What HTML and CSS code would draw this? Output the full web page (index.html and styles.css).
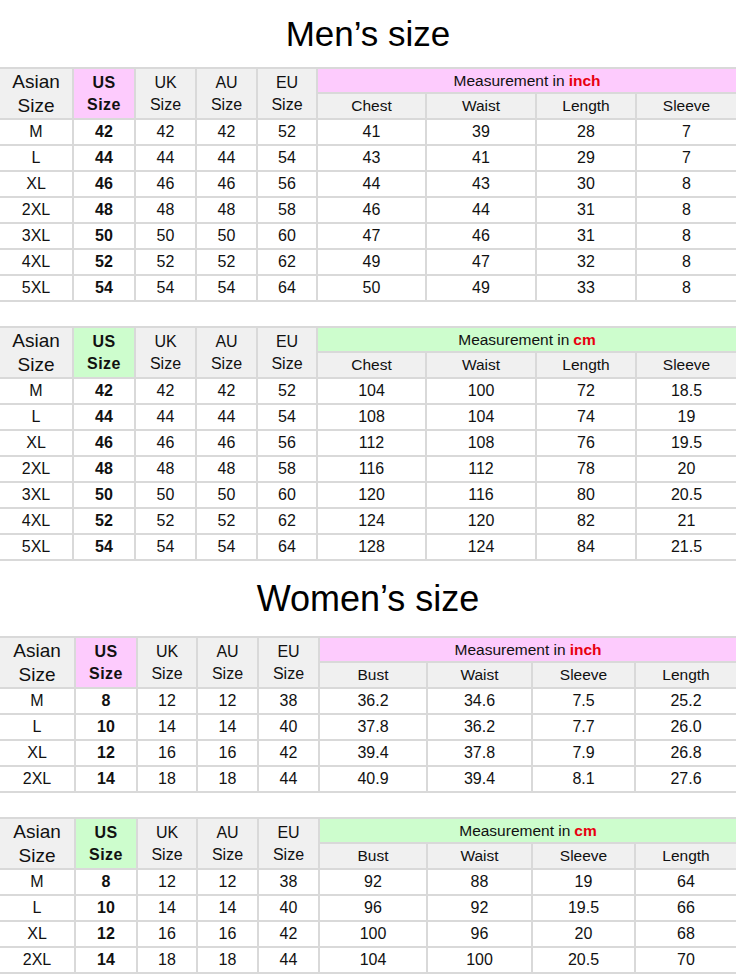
FILE: index.html
```html
<!DOCTYPE html>
<html lang="en">
<head>
<meta charset="utf-8">
<title>Size charts</title>
<link rel="stylesheet" href="styles.css">
</head>
<body>
<h1 class="title title-men">Men’s size</h1>

<div class="chart men inch">
  <div class="hd asian">Asian<br>Size</div>
  <div class="hd us">US<br>Size</div>
  <div class="hd">UK<br>Size</div>
  <div class="hd">AU<br>Size</div>
  <div class="hd">EU<br>Size</div>
  <div class="unit">Measurement in <b>inch</b></div>
  <div class="sub">Chest</div><div class="sub">Waist</div><div class="sub">Length</div><div class="sub">Sleeve</div>
  <div>M</div><div class="b">42</div><div>42</div><div>42</div><div>52</div><div>41</div><div>39</div><div>28</div><div>7</div>
  <div>L</div><div class="b">44</div><div>44</div><div>44</div><div>54</div><div>43</div><div>41</div><div>29</div><div>7</div>
  <div>XL</div><div class="b">46</div><div>46</div><div>46</div><div>56</div><div>44</div><div>43</div><div>30</div><div>8</div>
  <div>2XL</div><div class="b">48</div><div>48</div><div>48</div><div>58</div><div>46</div><div>44</div><div>31</div><div>8</div>
  <div>3XL</div><div class="b">50</div><div>50</div><div>50</div><div>60</div><div>47</div><div>46</div><div>31</div><div>8</div>
  <div>4XL</div><div class="b">52</div><div>52</div><div>52</div><div>62</div><div>49</div><div>47</div><div>32</div><div>8</div>
  <div>5XL</div><div class="b">54</div><div>54</div><div>54</div><div>64</div><div>50</div><div>49</div><div>33</div><div>8</div>
</div>

<div class="chart men cm">
  <div class="hd asian">Asian<br>Size</div>
  <div class="hd us">US<br>Size</div>
  <div class="hd">UK<br>Size</div>
  <div class="hd">AU<br>Size</div>
  <div class="hd">EU<br>Size</div>
  <div class="unit">Measurement in <b>cm</b></div>
  <div class="sub">Chest</div><div class="sub">Waist</div><div class="sub">Length</div><div class="sub">Sleeve</div>
  <div>M</div><div class="b">42</div><div>42</div><div>42</div><div>52</div><div>104</div><div>100</div><div>72</div><div>18.5</div>
  <div>L</div><div class="b">44</div><div>44</div><div>44</div><div>54</div><div>108</div><div>104</div><div>74</div><div>19</div>
  <div>XL</div><div class="b">46</div><div>46</div><div>46</div><div>56</div><div>112</div><div>108</div><div>76</div><div>19.5</div>
  <div>2XL</div><div class="b">48</div><div>48</div><div>48</div><div>58</div><div>116</div><div>112</div><div>78</div><div>20</div>
  <div>3XL</div><div class="b">50</div><div>50</div><div>50</div><div>60</div><div>120</div><div>116</div><div>80</div><div>20.5</div>
  <div>4XL</div><div class="b">52</div><div>52</div><div>52</div><div>62</div><div>124</div><div>120</div><div>82</div><div>21</div>
  <div>5XL</div><div class="b">54</div><div>54</div><div>54</div><div>64</div><div>128</div><div>124</div><div>84</div><div>21.5</div>
</div>

<h1 class="title title-women">Women’s size</h1>

<div class="chart women inch">
  <div class="hd asian">Asian<br>Size</div>
  <div class="hd us">US<br>Size</div>
  <div class="hd">UK<br>Size</div>
  <div class="hd">AU<br>Size</div>
  <div class="hd">EU<br>Size</div>
  <div class="unit">Measurement in <b>inch</b></div>
  <div class="sub">Bust</div><div class="sub">Waist</div><div class="sub">Sleeve</div><div class="sub">Length</div>
  <div>M</div><div class="b">8</div><div>12</div><div>12</div><div>38</div><div>36.2</div><div>34.6</div><div>7.5</div><div>25.2</div>
  <div>L</div><div class="b">10</div><div>14</div><div>14</div><div>40</div><div>37.8</div><div>36.2</div><div>7.7</div><div>26.0</div>
  <div>XL</div><div class="b">12</div><div>16</div><div>16</div><div>42</div><div>39.4</div><div>37.8</div><div>7.9</div><div>26.8</div>
  <div>2XL</div><div class="b">14</div><div>18</div><div>18</div><div>44</div><div>40.9</div><div>39.4</div><div>8.1</div><div>27.6</div>
</div>

<div class="chart women cm">
  <div class="hd asian">Asian<br>Size</div>
  <div class="hd us">US<br>Size</div>
  <div class="hd">UK<br>Size</div>
  <div class="hd">AU<br>Size</div>
  <div class="hd">EU<br>Size</div>
  <div class="unit">Measurement in <b>cm</b></div>
  <div class="sub">Bust</div><div class="sub">Waist</div><div class="sub">Sleeve</div><div class="sub">Length</div>
  <div>M</div><div class="b">8</div><div>12</div><div>12</div><div>38</div><div>92</div><div>88</div><div>19</div><div>64</div>
  <div>L</div><div class="b">10</div><div>14</div><div>14</div><div>40</div><div>96</div><div>92</div><div>19.5</div><div>66</div>
  <div>XL</div><div class="b">12</div><div>16</div><div>16</div><div>42</div><div>100</div><div>96</div><div>20</div><div>68</div>
  <div>2XL</div><div class="b">14</div><div>18</div><div>18</div><div>44</div><div>104</div><div>100</div><div>20.5</div><div>70</div>
</div>
</body>
</html>
```

FILE: styles.css
```css
* { box-sizing: border-box; }

html, body {
  margin: 0;
  padding: 0;
  background: #ffffff;
}

body {
  width: 736px;
  font-family: "Liberation Sans", Arial, sans-serif;
  color: #111111;
}

.title {
  margin: 0;
  font-weight: 400;
  text-align: center;
  color: #000000;
}

.title-men {
  font-size: 35px;
  line-height: 67px;
  height: 67px;
}

.title-women {
  font-size: 36px;
  line-height: 75px;
  height: 75px;
}

.chart {
  display: grid;
  gap: 2px;
  padding: 2px 0;
  background: #d9d9d9;
  grid-template-rows: 23px 24px;
  grid-auto-rows: 24px;
}

.chart + .chart {
  margin-top: 24px;
}

.men {
  grid-template-columns: 72px 60px 59px 59px 58px 107px 108px 98px 1fr;
}

.women {
  grid-template-columns: 74px 60px 58px 59px 59px 106px 103px 101px 1fr;
}

.chart > div {
  background: #ffffff;
  display: flex;
  align-items: center;
  justify-content: center;
  text-align: center;
  font-size: 16px;
  line-height: 18px;
}

.chart > .hd {
  grid-row: span 2;
  background: #f0f0f0;
  font-size: 16px;
  line-height: 22px;
}

.chart > .asian {
  font-size: 19px;
  line-height: 24px;
}

.chart > .us {
  font-size: 16px;
  font-weight: 700;
  letter-spacing: 0.5px;
}

.chart > .unit {
  grid-column: span 4;
  font-size: 15.5px;
}

.unit b {
  color: #e8000f;
  margin-left: 4px;
}

.chart > .sub {
  background: #f0f0f0;
  font-size: 15.5px;
}

.chart > .b {
  font-weight: 700;
}

.inch > .us,
.inch > .unit {
  background: #fdcbfd;
}

.cm > .us,
.cm > .unit {
  background: #cdfdcd;
}
```
